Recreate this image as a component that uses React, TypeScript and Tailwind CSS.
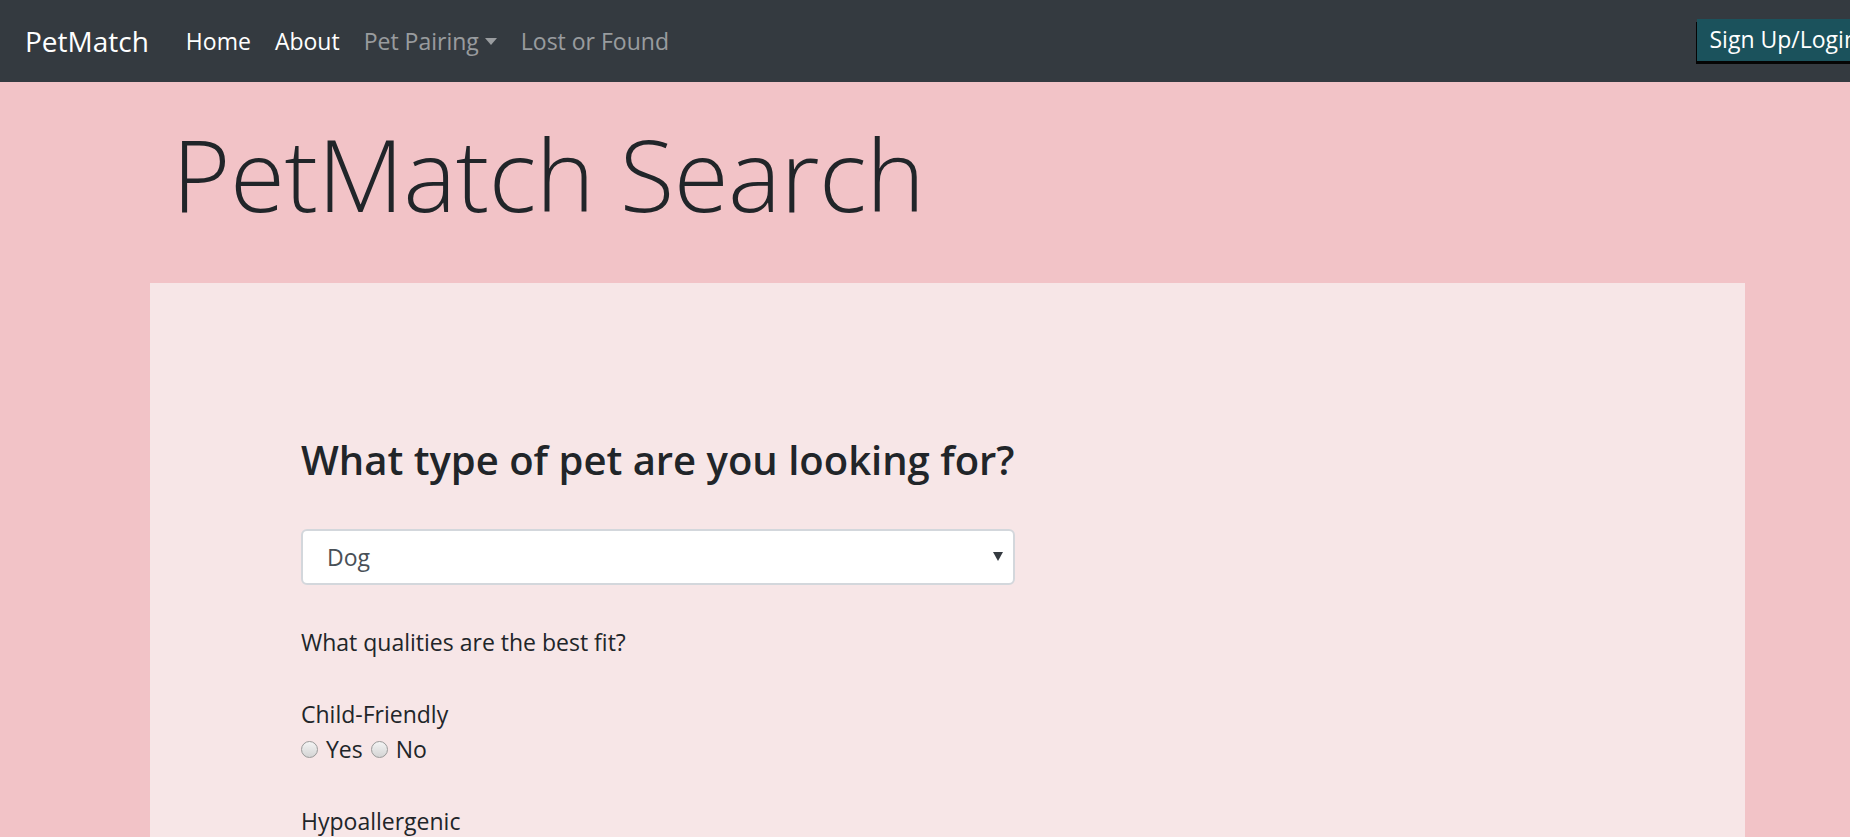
const font = { fontFamily: '"Segoe UI", "Open Sans", "Noto Sans", sans-serif' };

function Radio({ label }: { label: string }) {
  return (
    <label className="inline-flex items-center">
      <span className="inline-block w-[17px] h-[17px] rounded-full border border-[#9a9a9a] bg-gradient-to-b from-[#f4f4f4] to-[#d4d4d4] mr-[8px]" />
      <span className="mr-[8px]">{label}</span>
    </label>
  );
}

function Question({ title }: { title: string }) {
  return (
    <div className="mb-[37px]">
      <div className="h-[35px] leading-[35px]">{title}</div>
      <div className="h-[35px] flex items-center">
        <Radio label="Yes" />
        <Radio label="No" />
      </div>
    </div>
  );
}

export default function App() {
  return (
    <div className="min-h-screen w-full overflow-hidden bg-[#f2c3c7] text-[#212529]" style={font}>
      <nav className="h-[82px] bg-[#343a40] flex items-center pl-[25px] overflow-hidden">
        <a className="text-white text-[28px] mr-[37px] leading-none">PetMatch</a>
        <ul className="flex items-center text-[23px] leading-none">
          <li className="text-white mr-[24px]">Home</li>
          <li className="text-white mr-[24px]">About</li>
          <li className="text-white/50 mr-[24px] flex items-center">
            Pet Pairing
            <span className="ml-[6px] w-0 h-0 border-l-[6px] border-r-[6px] border-t-[7px] border-l-transparent border-r-transparent border-t-white/50" />
          </li>
          <li className="text-white/50">Lost or Found</li>
        </ul>
        <button className="ml-auto mr-[-28px] mt-[-3px] h-[42px] pl-[12px] pr-[20px] bg-[#1b525c] text-white text-[23px] shadow-[-1px_3px_0_#050505] whitespace-nowrap">
          Sign Up/Login
        </button>
      </nav>

      <div className="pl-[172px] pt-[31px] h-[201px]">
        <h1 className="text-[100px] font-light leading-[1.2] tracking-[-0.5px]">PetMatch Search</h1>
      </div>

      <div className="ml-[150px] w-[1595px] bg-[#f7e6e7] pl-[151px] pt-[153px] pb-[60px] text-[23px]">
        <h2 className="text-[40px] font-semibold leading-[1.2] mb-[45px]">What type of pet are you looking for?</h2>
        <div className="relative w-[714px] h-[56px] bg-white border-2 border-[#d3d7dc] rounded-[6px] flex items-center pl-[24px] text-[#495057]">
          Dog
          <span className="absolute right-[10px] top-[21px] w-0 h-0 border-l-[5px] border-r-[5px] border-t-[9px] border-l-transparent border-r-transparent border-t-[#343a40]" />
        </div>
        <div className="mt-[40px] h-[35px] leading-[35px] mb-[37px]">What qualities are the best fit?</div>
        <Question title="Child-Friendly" />
        <Question title="Hypoallergenic" />
        <Question title="Energy Level" />
      </div>
    </div>
  );
}
